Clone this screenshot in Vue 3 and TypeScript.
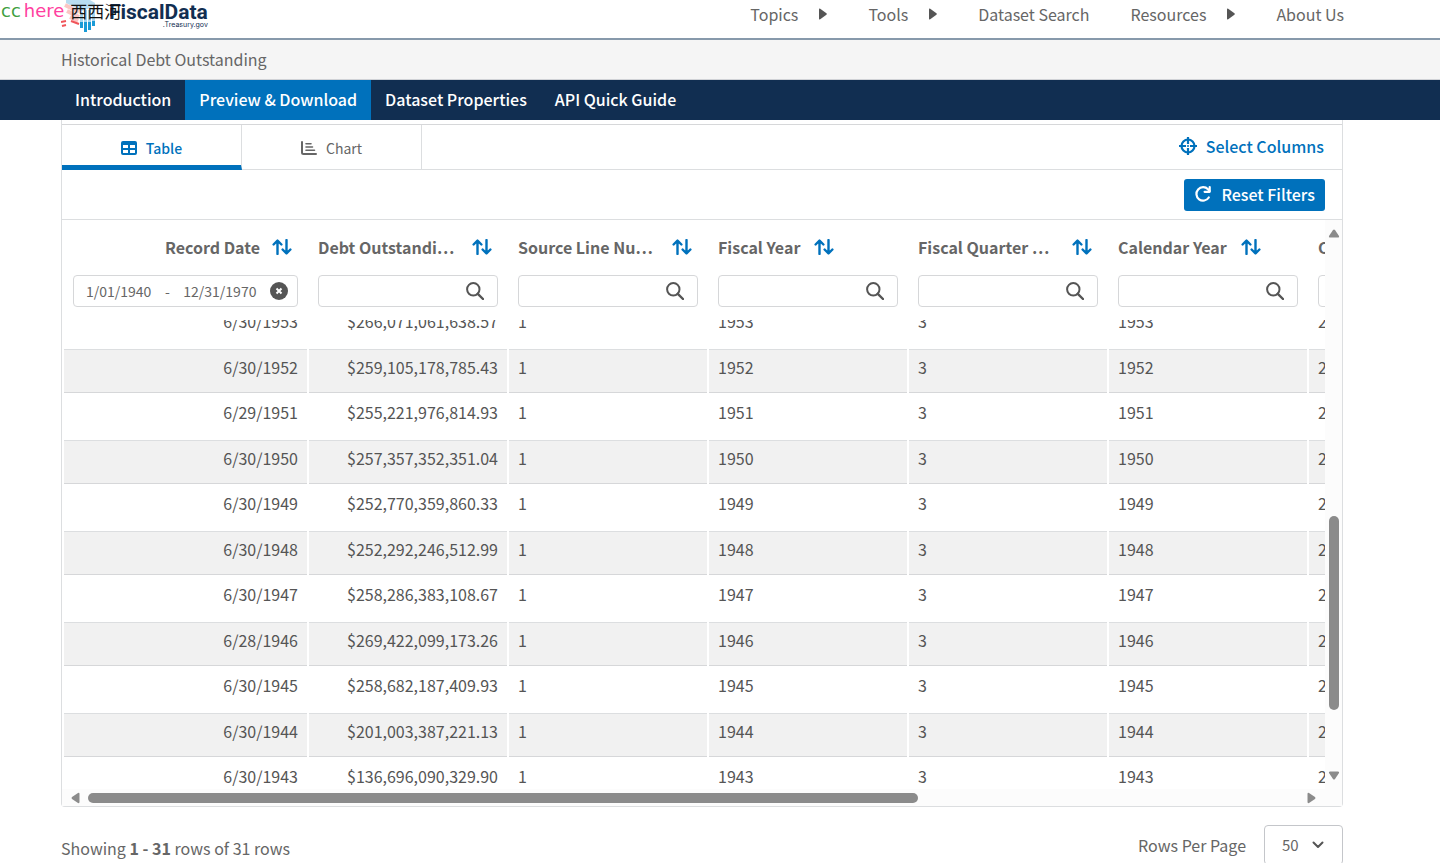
<script setup lang="ts">
import { onMounted, ref } from 'vue'

interface Column {
  label: string
  wide: boolean
}

interface NavItem {
  label: string
  menu: boolean
}

const nav: NavItem[] = [
  { label: 'Topics', menu: true },
  { label: 'Tools', menu: true },
  { label: 'Dataset Search', menu: false },
  { label: 'Resources', menu: true },
  { label: 'About Us', menu: false },
]

const sections = ['Introduction', 'Preview & Download', 'Dataset Properties', 'API Quick Guide']
const activeSection = ref('Preview & Download')

const columns: Column[] = [
  { label: 'Debt Outstandi…', wide: true },
  { label: 'Source Line Nu…', wide: true },
  { label: 'Fiscal Year', wide: false },
  { label: 'Fiscal Quarter …', wide: true },
  { label: 'Calendar Year', wide: false },
  { label: 'C', wide: false },
]

const records: [string, string][] = [
  ['6/30/1953', '$266,071,061,638.57'],
  ['6/30/1952', '$259,105,178,785.43'],
  ['6/29/1951', '$255,221,976,814.93'],
  ['6/30/1950', '$257,357,352,351.04'],
  ['6/30/1949', '$252,770,359,860.33'],
  ['6/30/1948', '$252,292,246,512.99'],
  ['6/30/1947', '$258,286,383,108.67'],
  ['6/28/1946', '$269,422,099,173.26'],
  ['6/30/1945', '$258,682,187,409.93'],
  ['6/30/1944', '$201,003,387,221.13'],
  ['6/30/1943', '$136,696,090,329.90'],
]

const yearOf = (date: string) => date.slice(-4)

const viewport = ref<HTMLElement | null>(null)
onMounted(() => {
  if (viewport.value) viewport.value.scrollTop = 20
})
</script>

<template>
  <div class="page">
    <header class="site-header">
      <a class="logo" href="#" aria-label="Fiscal Data home">
        <svg class="logo-mark" width="38" height="34" viewBox="0 0 38 34" aria-hidden="true">
          <path d="M5 0h24l5 3v3l-13 5-8-4-8-4z" fill="#b9dcf0" />
          <path d="M4 5l14 7M6 11l12 6M9 17l8 4" stroke="#fbc6c4" stroke-width="4" />
          <path d="M0 22l5-1M1 26l4-1M10 21l8 3" stroke="#f0555a" stroke-width="2" />
          <path d="M20.500 12v11M24.500 10v13M28.500 10v13M32.500 8v13" stroke="#a5d5ee" stroke-width="3" />
          <path d="M20.500 22v6M24.500 22v10M28.500 22v8M32.500 21v5" stroke="#1a9bd7" stroke-width="3" />
        </svg>
        <span class="logo-words">
          <span class="logo-name">FiscalData</span>
          <span class="logo-sub">.Treasury.gov</span>
        </span>
      </a>
      <nav class="main-nav" aria-label="Main">
        <template v-for="item in nav" :key="item.label">
          <button v-if="item.menu" type="button" class="nav-item">
            {{ item.label }}
            <svg width="8" height="12" viewBox="0 0 8 12" aria-hidden="true">
              <path d="M0 1.4Q0 0 1.2.7L7.4 5.3Q8.2 6 7.4 6.7L1.2 11.3Q0 12 0 10.6z" fill="#555" />
            </svg>
          </button>
          <a v-else href="#" class="nav-item">{{ item.label }}</a>
        </template>
      </nav>
    </header>
    <div class="watermark"><span class="wm-cc">cc</span><span class="wm-here">here</span><span class="wm-name">西西河</span></div>

    <h1 class="dataset-title">Historical Debt Outstanding</h1>
    <nav class="section-nav" aria-label="Sections">
      <a
        v-for="s in sections"
        :key="s"
        href="#"
        :class="{ active: s === activeSection }"
        @click.prevent="activeSection = s"
      >{{ s }}</a>
    </nav>

    <main class="content">
      <section class="panel">
        <div class="tabs">
          <button type="button" class="tab selected">
            <svg width="16" height="14" viewBox="0 0 16 14" aria-hidden="true">
              <path fill-rule="evenodd" fill="currentColor" d="M2 0h12a2 2 0 0 1 2 2v10a2 2 0 0 1-2 2H2a2 2 0 0 1-2-2V2a2 2 0 0 1 2-2zM2 4V7h5V4zM9 4V7h5V4zM2 9v3h5V9zM9 9v3h5V9z" />
            </svg>
            Table
          </button>
          <button type="button" class="tab">
            <svg width="16" height="14" viewBox="0 0 16 14" aria-hidden="true">
              <g fill="none" stroke="currentColor" stroke-width="2" stroke-linecap="round" stroke-linejoin="round">
                <path d="M1 1v10.500Q1 13 2.500 13H15" />
                <path d="M5 2.700h5M5 6h6.500M5 9.300h8.500" stroke-width="1.600" />
              </g>
            </svg>
            Chart
          </button>
          <button type="button" class="select-columns">
            <svg width="18" height="18" viewBox="0 0 18 18" aria-hidden="true">
              <g fill="none" stroke="currentColor" stroke-width="2.200">
                <circle cx="9" cy="9" r="6.500" />
                <path d="M9 0v7M9 11v7M0 9h7M11 9h7" />
              </g>
              <circle cx="9" cy="9" r="1" fill="currentColor" />
            </svg>
            Select Columns
          </button>
        </div>
        <div class="filter-bar">
          <button type="button" class="reset">
            <svg width="18" height="18" viewBox="0 0 18 18" aria-hidden="true">
              <path d="M14.800 12.500A6.700 6.700 0 1 1 14 4.300L15.500 6" fill="none" stroke="currentColor" stroke-width="2.200" stroke-linecap="round" />
              <path d="M15.700 2V6.800H10.600" fill="none" stroke="currentColor" stroke-width="2.200" stroke-linecap="round" stroke-linejoin="round" />
            </svg>
            Reset Filters
          </button>
        </div>

        <div class="grid">
          <div ref="viewport" class="viewport">
            <table>
              <colgroup>
                <col class="col-date" />
                <col v-for="c in columns" :key="c.label" class="col-data" />
              </colgroup>
              <thead>
                <tr>
                  <th scope="col">
                    <div class="head right">
                      <span>Record Date</span>
                      <button type="button" class="sort" aria-label="Sort by Record Date">
                        <svg width="20" height="16" viewBox="0 0 20 16" aria-hidden="true">
                          <path d="M5.500 15V1.800M1.600 5.500 5.500 1.500 9.400 5.500M14.500 1v13.200M10.600 10.500l3.900 4 3.900-4" />
                        </svg>
                      </button>
                    </div>
                    <div class="date-filter">
                      <span>1/01/1940</span><span>-</span><span>12/31/1970</span>
                      <button type="button" aria-label="Clear dates">
                        <svg width="18" height="18" viewBox="0 0 18 18" aria-hidden="true">
                          <circle cx="9" cy="9" r="9" fill="#555" />
                          <path d="M6.500 6.500l5 5M11.500 6.500l-5 5" stroke="#fff" stroke-width="2" />
                        </svg>
                      </button>
                    </div>
                  </th>
                  <th v-for="c in columns" :key="c.label" scope="col">
                    <div class="head">
                      <span :class="{ wide: c.wide }">{{ c.label }}</span>
                      <button type="button" class="sort" :aria-label="'Sort by ' + c.label">
                        <svg width="20" height="16" viewBox="0 0 20 16" aria-hidden="true">
                          <path d="M5.500 15V1.800M1.600 5.500 5.500 1.500 9.400 5.500M14.500 1v13.200M10.600 10.500l3.900 4 3.900-4" />
                        </svg>
                      </button>
                    </div>
                    <div class="search">
                      <input type="text" :aria-label="'Filter ' + c.label" />
                      <svg width="18" height="18" viewBox="0 0 18 18" aria-hidden="true">
                        <circle cx="7.300" cy="7.300" r="6.200" fill="none" stroke="#555" stroke-width="2" />
                        <path d="M11.800 11.800 17 17" stroke="#555" stroke-width="2.400" stroke-linecap="round" />
                      </svg>
                    </div>
                  </th>
                </tr>
              </thead>
              <tbody>
                <tr v-for="[date, debt] in records" :key="date">
                  <td class="right">{{ date }}</td>
                  <td class="right">{{ debt }}</td>
                  <td>1</td>
                  <td>{{ yearOf(date) }}</td>
                  <td>3</td>
                  <td>{{ yearOf(date) }}</td>
                  <td>2</td>
                </tr>
              </tbody>
            </table>
          </div>
          <div class="vbar" aria-hidden="true">
            <svg width="12" height="9" viewBox="0 0 12 9"><path d="M5 1Q6 0 7 1l4 6q.6 1.500-1 1.500H2Q.4 8.500 1 7z" /></svg>
            <div class="vtrack"><i /></div>
            <svg width="12" height="9" viewBox="0 0 12 9"><path d="M5 8Q6 9 7 8l4-6q.6-1.500-1-1.500H2Q.4.5 1 2z" /></svg>
          </div>
          <div class="hbar" aria-hidden="true">
            <svg width="9" height="12" viewBox="0 0 9 12"><path d="M1 5Q0 6 1 7l6 4q1.500.6 1.500-1V2Q8.500.4 7 1z" /></svg>
            <div class="htrack"><i /></div>
            <svg width="9" height="12" viewBox="0 0 9 12"><path d="M8 5Q9 6 8 7l-6 4Q.5 11.600.5 10V2Q.5.4 2 1z" /></svg>
          </div>
        </div>
      </section>

      <footer class="pager">
        <p>Showing <b>1 - 31</b> rows of 31 rows</p>
        <div class="per-page">
          <label for="rows">Rows Per Page</label>
          <div class="select-box">
            <select id="rows"><option>50</option></select>
            <svg width="12" height="8" viewBox="0 0 12 8" aria-hidden="true">
              <path d="M1.500 1.500 6 6l4.500-4.500" fill="none" stroke="#555" stroke-width="2" stroke-linecap="round" stroke-linejoin="round" />
            </svg>
          </div>
        </div>
      </footer>
    </main>
  </div>
</template>

<style>
body {
  margin: 0;
  background: #fff;
}
</style>

<style scoped>
.page {
  position: relative;
  height: 100vh;
  overflow: hidden;
  font-family: "Noto Sans CJK SC", "Noto Sans", sans-serif;
  font-size: 16px;
  line-height: 24px;
  color: #666;
}
.page * {
  box-sizing: border-box;
}
button,
input,
select {
  font: inherit;
  color: inherit;
  background: none;
  border: 0;
  margin: 0;
  padding: 0;
}
a {
  color: inherit;
  text-decoration: none;
}
svg {
  flex: none;
  display: block;
}
.site-header {
  height: 40px;
  border-bottom: 2px solid #8799ab;
  padding: 0 96px 0 61px;
  display: flex;
  justify-content: space-between;
  align-items: flex-end;
}
.logo {
  display: flex;
  align-items: flex-start;
  gap: 10px;
  height: 100%;
}
.logo-words {
  display: flex;
  flex-direction: column;
  align-items: flex-end;
  padding-top: 3px;
  color: #112e51;
}
.logo-name {
  font: 700 21px/19px Roboto, sans-serif;
}
.logo-sub {
  font: 7px/6px Inter, sans-serif;
}
.main-nav {
  display: flex;
  margin-bottom: 12px;
}
.nav-item {
  display: flex;
  align-items: center;
  gap: 21px;
  margin-left: 41px;
}
.watermark {
  position: absolute;
  left: 1px;
  top: 0;
  display: flex;
  font: 18px/22px "DejaVu Sans", sans-serif;
}
.wm-cc {
  color: #3f9f3f;
}
.wm-here {
  color: #ff3fa0;
  margin-left: 3px;
}
.wm-name {
  color: #111;
  margin-left: 6px;
  font-family: "Noto Sans CJK SC", sans-serif;
  font-size: 17px;
}
.dataset-title {
  margin: 0;
  height: 40px;
  padding: 0 61px;
  background: #f5f5f5;
  border-bottom: 1px solid #d0d2d6;
  font-size: 16px;
  font-weight: 400;
  line-height: 39px;
}
.section-nav {
  display: flex;
  height: 40px;
  padding-left: 61px;
  background: #112e51;
  color: #fff;
  font-weight: 500;
  line-height: 38px;
}
.section-nav a {
  padding: 0 14px;
}
.section-nav .active {
  background: #0071bc;
}
.content {
  padding: 0 97px 0 61px;
}
.panel {
  border: 1px solid #dcdee0;
  border-top: 0;
  border-radius: 0 0 4px 4px;
  padding-top: 4px;
}
.tabs {
  display: flex;
  height: 46px;
  border-top: 1px solid #d6d7d9;
  border-bottom: 1px solid #dcdee0;
}
.tab {
  width: 180px;
  height: 45px;
  display: flex;
  align-items: center;
  justify-content: center;
  gap: 9px;
  border-right: 1px solid #dcdee0;
  font-size: 14px;
}
.tab.selected {
  color: #0071bc;
  font-weight: 500;
  border-bottom: 5px solid #0071bc;
  padding-top: 5px;
}
.select-columns {
  display: flex;
  align-items: center;
  gap: 9px;
  margin-left: auto;
  padding: 0 18px 2px 0;
  color: #0071bc;
  font-weight: 500;
}
.filter-bar {
  height: 50px;
  display: flex;
  justify-content: flex-end;
  align-items: center;
  padding-right: 17px;
  border-bottom: 1px solid #dcdee0;
}
.reset {
  display: flex;
  align-items: center;
  gap: 9px;
  height: 32px;
  padding: 0 10px 2px;
  border-radius: 3px;
  background: #0071bc;
  color: #fff;
  font-weight: 500;
}
.grid {
  display: grid;
  grid-template-columns: minmax(0, 1fr) 17px;
  grid-template-rows: 569px 17px;
}
.viewport {
  overflow: hidden;
}
table {
  table-layout: fixed;
  width: 1445px;
  border-spacing: 2px;
}
.col-date {
  width: 243px;
}
.col-data {
  width: 198px;
}
th {
  position: sticky;
  top: 0;
  height: 100px;
  padding: 15px 9px 0;
  background: #fff;
  text-align: left;
  vertical-align: top;
  font-weight: 700;
}
.head {
  display: flex;
  align-items: center;
  gap: 14px;
  white-space: nowrap;
}
.head .wide {
  width: 140px;
}
.head.right {
  justify-content: flex-end;
  gap: 12px;
  padding-right: 6px;
}
.sort path {
  fill: none;
  stroke: #0071bc;
  stroke-width: 2.4;
  stroke-linecap: round;
  stroke-linejoin: round;
}
.search,
.date-filter {
  display: flex;
  align-items: center;
  height: 32px;
  margin-top: 16px;
  border: 1px solid #d6d7d9;
  border-radius: 4px;
}
.search {
  padding-right: 13px;
}
.search input {
  flex: 1;
  min-width: 0;
  height: 100%;
}
.date-filter {
  justify-content: space-between;
  padding: 0 9px 1px 12px;
  font-size: 14px;
  font-weight: 400;
}
td {
  height: 43px;
  padding: 0 9px 9px;
  color: #555;
}
.right {
  text-align: right;
}
tbody tr:nth-child(even) td {
  height: 44px;
  background: #f1f1f1;
  border-top: 1px solid #dcdee0;
  border-bottom: 1px solid #d6d7d9;
}
.vbar,
.hbar {
  display: flex;
  align-items: center;
  background: #fcfcfc;
}
.vbar {
  flex-direction: column;
  padding: 9px 0;
}
.hbar {
  grid-column: 1 / -1;
  padding: 0 26px 0 9px;
}
.vbar path,
.hbar path {
  fill: #8b8b8b;
}
.vtrack {
  flex: 1;
  width: 10px;
  padding-top: 278px;
}
.vtrack i {
  display: block;
  width: 10px;
  height: 194px;
  border-radius: 5px;
  background: #8b8b8b;
}
.htrack {
  flex: 1;
  padding: 0 8px;
}
.htrack i {
  display: block;
  width: calc(100% - 381px);
  height: 10px;
  border-radius: 5px;
  background: #8b8b8b;
}
.pager {
  display: flex;
  justify-content: space-between;
  align-items: flex-start;
  padding-top: 18px;
}
.pager p {
  margin: 11px 0 0;
}
.per-page {
  display: flex;
  align-items: center;
  gap: 18px;
}
.select-box {
  display: grid;
  align-items: center;
  width: 79px;
  height: 40px;
  border: 1px solid #c4c6ca;
  border-radius: 4px;
}
.select-box select,
.select-box svg {
  grid-area: 1 / 1;
}
.select-box select {
  appearance: none;
  width: 100%;
  height: 100%;
  padding-left: 17px;
  font-size: 15px;
}
.select-box svg {
  justify-self: end;
  margin-right: 18px;
  pointer-events: none;
}
</style>
